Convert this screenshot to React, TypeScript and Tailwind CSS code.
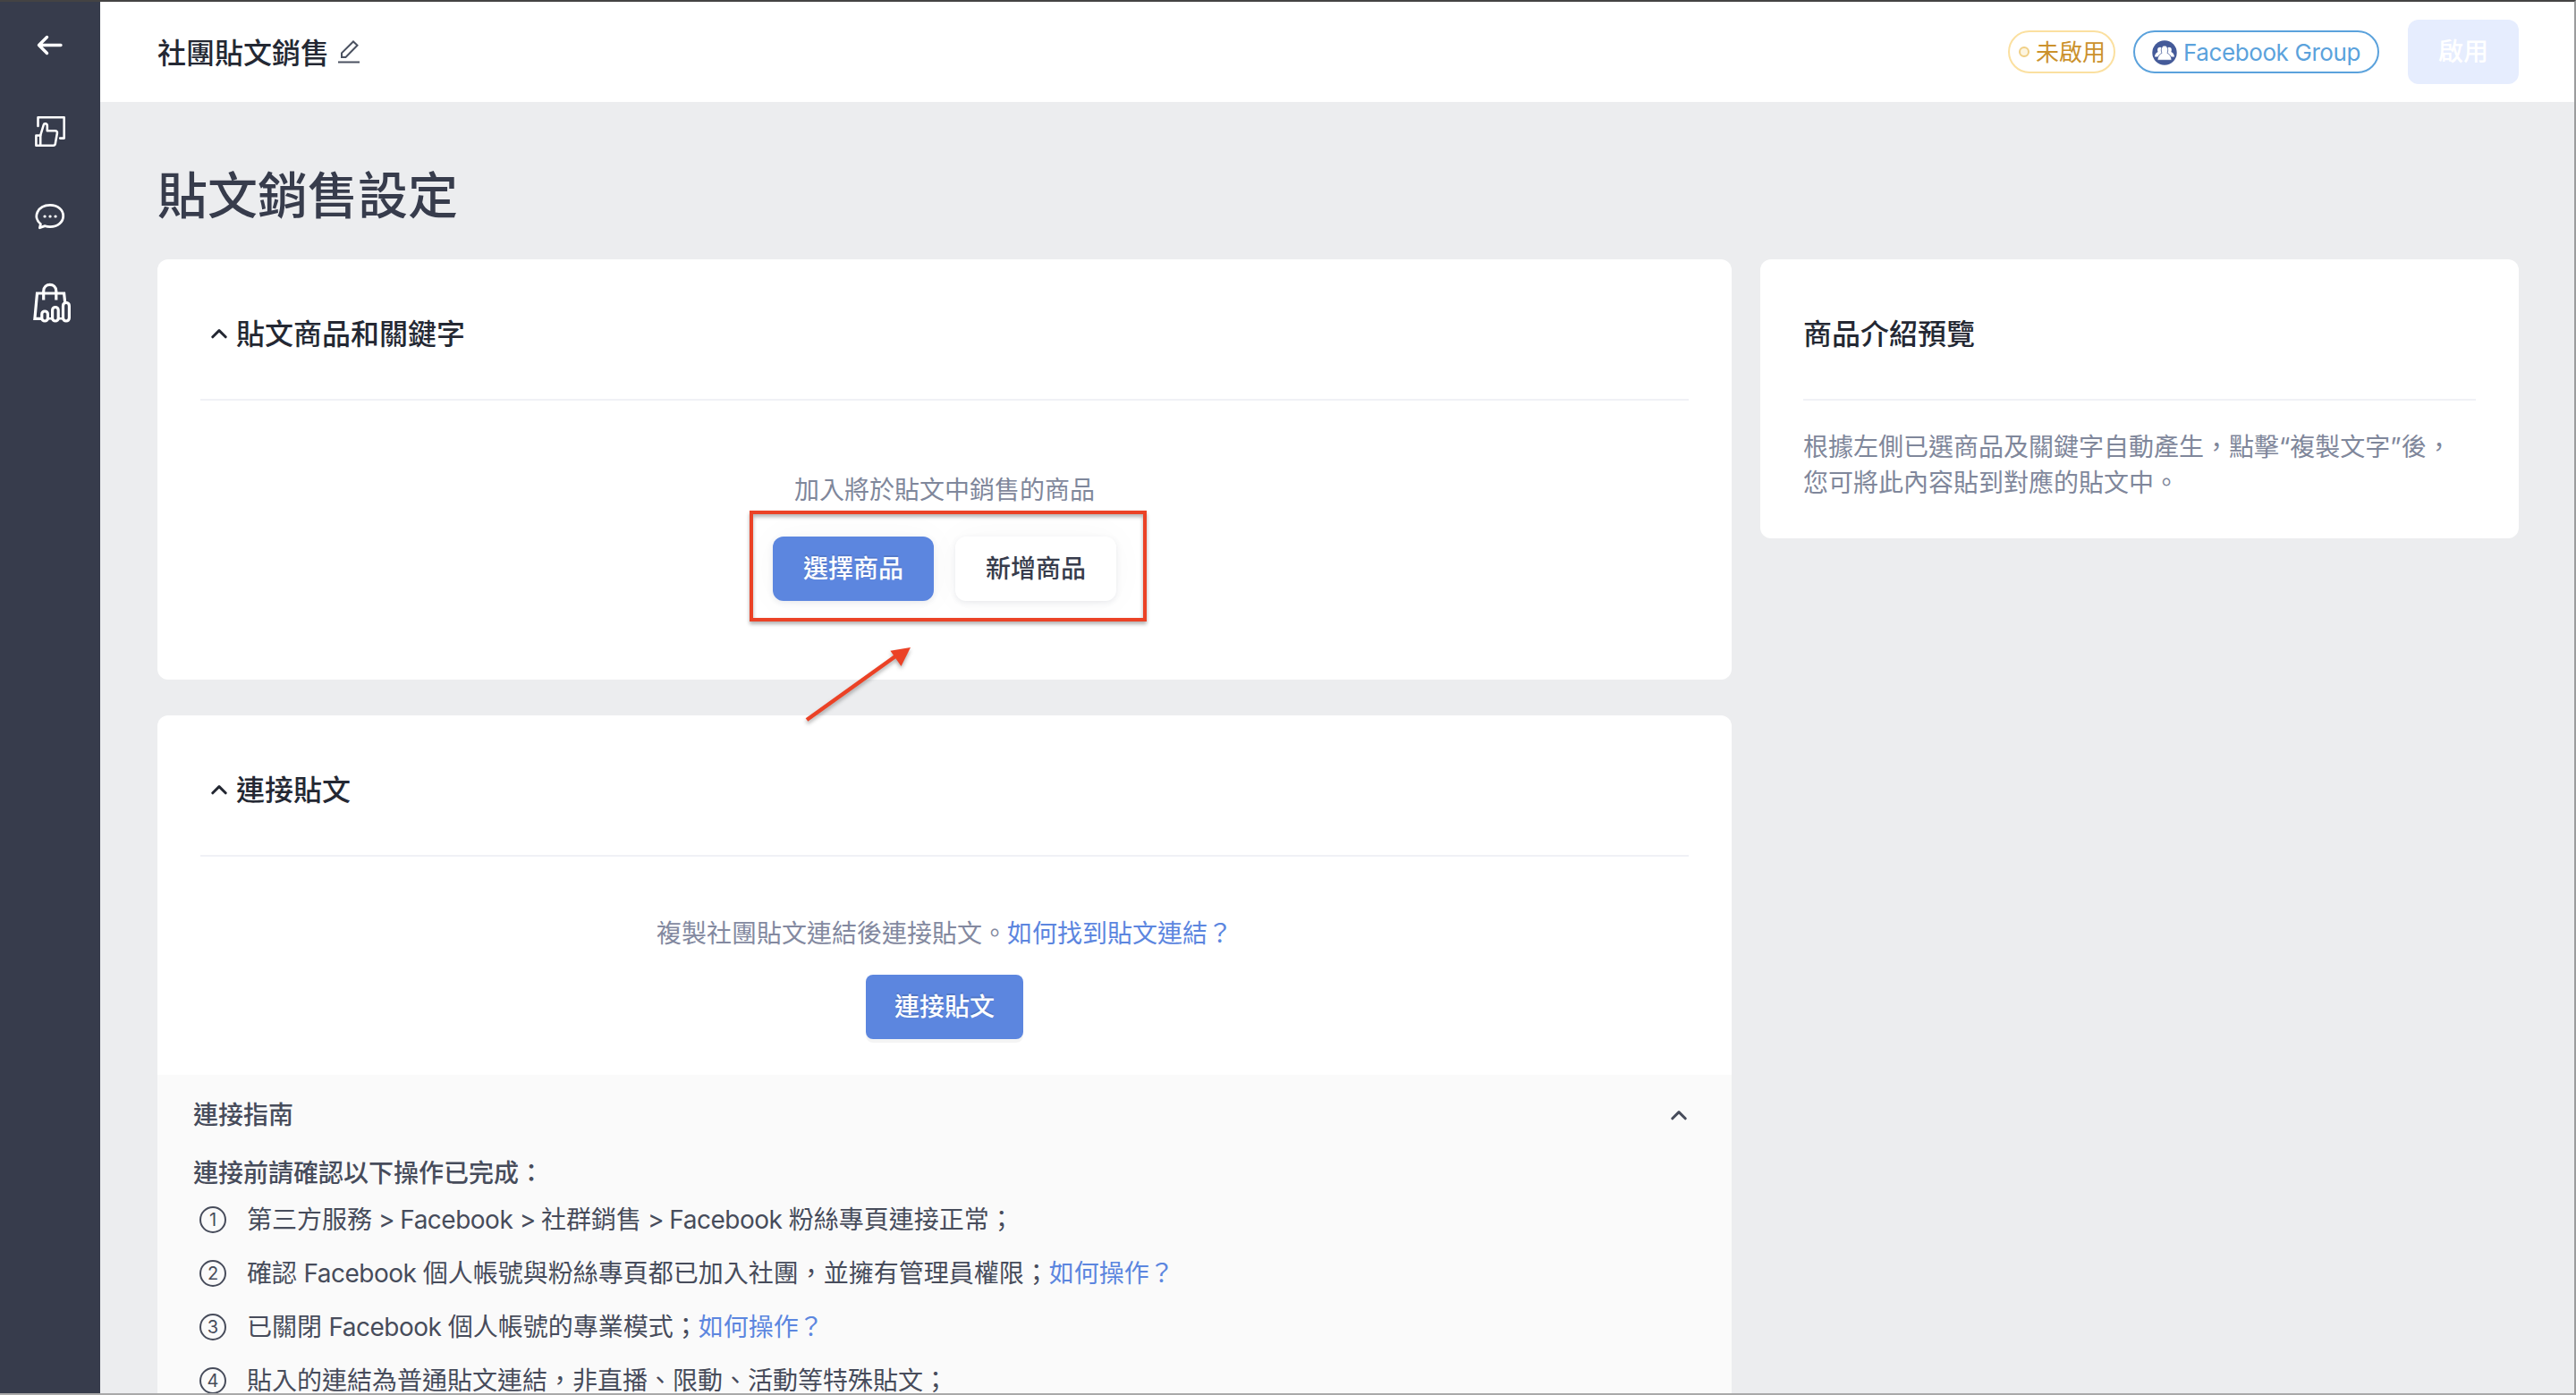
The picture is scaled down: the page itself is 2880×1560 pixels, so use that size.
import React from 'react';

function Chevron({ className }: { className?: string }) {
  return (
    <svg width="18" height="12" viewBox="0 0 18 12" fill="none" stroke="currentColor" strokeWidth="3" strokeLinecap="round" strokeLinejoin="round" className={className}>
      <path d="M1.8 9.8 9 2.6l7.2 7.2" />
    </svg>
  );
}

function Sidebar() {
  return (
    <nav className="flex w-28 shrink-0 flex-col items-center bg-[#373c4c] text-white">
      <svg className="mt-8 h-10 w-28" viewBox="0 0 112 40" fill="none" stroke="currentColor" strokeWidth="3.4" strokeLinecap="round" strokeLinejoin="round">
        <path d="M44 16.500H68M52.500 7.500 43.500 16.500l9 9" />
      </svg>
      <svg className="mt-12 h-12 w-28" viewBox="0 0 112 48" fill="none" stroke="currentColor" strokeWidth="2.600" strokeLinecap="round" strokeLinejoin="round">
        <path d="M42.500 19V9.300h29.200v23.300h-4.500" />
        <path d="M40.400 29.500h4.800v11.200h-4.800z" />
        <path d="M45.200 29.500l3.600-12c.6-2 4-1.300 4 1v5.800h8.900c1.600 0 2.500 1 2.200 2.600l-2.100 12c-.2 1.100-1 1.800-2.200 1.800H45.200" />
      </svg>
      <svg className="mt-12 h-12 w-28" viewBox="0 0 112 48" fill="none" stroke="currentColor" strokeWidth="2.800" strokeLinecap="round" strokeLinejoin="round">
        <path d="M44.400 36.700l1-4.200C36 25 42 11.400 56 11.400c9 0 14.700 5.600 14.700 12.100S65 35.600 56 35.600c-2.200 0-4-.3-5.600-.9z" />
        <path d="M50 24h.1M56 24h.1M62 24h.1" strokeWidth="3.200" />
      </svg>
      <svg className="mt-12 h-12 w-28" viewBox="0 0 112 48" fill="none" stroke="currentColor" strokeWidth="3.200">
        <path d="M46 42.300h-7.100L41.500 14h30.100l1.200 11M48.700 21.500V11.500c0-9.600 14.100-9.600 14.100 0v10" />
        <path d="M54 42.300h4M65 42.300h5" strokeWidth="2.400" />
        <rect x="46.800" y="34" width="6.600" height="11" rx="3.300" />
        <rect x="58.600" y="29.500" width="6.600" height="15.500" rx="3.300" />
        <rect x="70.500" y="24.500" width="6.900" height="20.500" rx="3.400" />
      </svg>
    </nav>
  );
}

function Header() {
  return (
    <header className="flex h-28 items-center bg-white pr-16 pl-16">
      <h1 className="mt-1 text-[32px] leading-none font-medium text-[#242833]">社團貼文銷售</h1>
      <svg className="ml-2 h-7 w-7" viewBox="0 0 28 28" fill="none" stroke="#4a5160" strokeWidth="2">
        <path d="M2 25.400h24M6 19.900v-4.600L19 2.500l4.500 4.200L10.500 19.900z" />
      </svg>
      <div className="ml-auto flex h-12 w-[120px] items-center rounded-full border-2 border-[#fbe0a0] text-[26px] text-[#cb912c]">
        <span className="mr-[7px] ml-2.5 h-3 w-3 rounded-full border-2 border-[#f0cf85] bg-[#fdf5e0]" />
        未啟用
      </div>
      <div className="ml-5 flex h-12 w-[275px] items-center rounded-full border-2 border-[#5ba2dc] pl-[19px] text-[26px] tracking-[-0.4px] text-[#5ba2dc]">
        <svg className="mt-0.5 mr-[7px] h-7 w-7" viewBox="0 0 28 28">
          <circle cx="14" cy="14" r="13.700" fill="#445a99" />
          <g fill="#fff">
            <path d="M3 18.500c.4-3.600 2-4.500 3.600-5.600-.9-2-.6-5.200 2.400-5.200 3.200 0 3.300 3.200 2.400 5.200l1 5.600z" />
            <path d="M25 18.500c-.4-3.600-2-4.500-3.600-5.600.9-2 .6-5.200-2.400-5.200-3.200 0-3.300 3.200-2.400 5.200l-1 5.600z" />
          </g>
          <path d="M6 22.300c.5-5 2.500-6.600 5-7.900-1.200-2.500-1.200-8.400 3-8.400s4.200 5.900 3 8.400c2.500 1.300 4.500 2.900 5 7.900z" fill="#fff" stroke="#445a99" strokeWidth="0.800" />
        </svg>
        Facebook Group
      </div>
      <button className="ml-8 flex h-[72px] w-[124px] items-center justify-center rounded-xl bg-[#e6edfe] text-[28px] font-medium text-white">啟用</button>
    </header>
  );
}

function SectionTitle({ children }: { children: React.ReactNode }) {
  return (
    <div className="mx-12 flex h-[158px] items-center border-b-2 border-[#f0f1f6] pl-3 text-[#242833]">
      <Chevron className="mt-2.5 mr-2.5" />
      <h3 className="mt-[11px] text-[32px] leading-none font-medium">{children}</h3>
    </div>
  );
}

function ProductCard() {
  return (
    <section className="h-[470px] rounded-xl bg-white">
      <SectionTitle>貼文商品和關鍵字</SectionTitle>
      <div className="flex flex-col items-center pt-20">
        <p className="text-[28px] leading-10 text-[#7f879b]">加入將於貼文中銷售的商品</p>
        <div className="relative mt-8 flex gap-6">
          <button className="h-[72px] w-[180px] rounded-xl bg-[#5c86df] text-[28px] font-medium text-white shadow-[0_2px_6px_rgba(60,70,100,0.1),0_0_40px_rgba(0,0,0,0.03)] [text-shadow:0_-2px_0_rgba(0,0,0,0.1)]">選擇商品</button>
          <button className="h-[72px] w-[180px] rounded-xl bg-white text-[28px] font-medium text-[#373c4c] shadow-[0_2px_6px_rgba(60,70,100,0.1),0_0_40px_rgba(0,0,0,0.03)]">新增商品</button>
          <div className="absolute -top-[29px] -left-[26px] h-[124px] w-[444px] border-4 border-[#eb4226] shadow-[0_3px_4px_rgba(0,0,0,0.3),inset_0_3px_4px_rgba(0,0,0,0.3)]" />
          <svg className="absolute top-[118px] left-[30px] h-24 w-32 drop-shadow-[0_3px_2px_rgba(0,0,0,0.3)]" viewBox="0 0 128 96" fill="#eb4226">
            <path d="M8 87 107 16" stroke="#eb4226" strokeWidth="4.400" />
            <path d="M124 6 101.400 9.700 113.500 27z" />
          </svg>
        </div>
      </div>
    </section>
  );
}

const link = 'text-[#5c86df]';

const steps: { text: string; help?: boolean }[] = [
  { text: '第三方服務 > Facebook > 社群銷售 > Facebook 粉絲專頁連接正常；' },
  { text: '確認 Facebook 個人帳號與粉絲專頁都已加入社團，並擁有管理員權限；', help: true },
  { text: '已關閉 Facebook 個人帳號的專業模式；', help: true },
  { text: '貼入的連結為普通貼文連結，非直播、限動、活動等特殊貼文；' },
];

// Latin runs inside the Chinese sentences are set slightly tighter.
function MixedText({ children }: { children: string }) {
  return (
    <>
      {children.split(/( ?Facebook ?| ?> ?)/).map((part, i) => {
        if (part.includes('Facebook')) return <span key={i} className="tracking-[-0.5px]">{part}</span>;
        if (part.includes('>')) return <span key={i} className="tracking-[-1px]">{part}</span>;
        return part;
      })}
    </>
  );
}

function ConnectCard() {
  return (
    <section className="mt-10 rounded-xl bg-white">
      <SectionTitle>連接貼文</SectionTitle>
      <div className="flex h-[244px] flex-col items-center pt-[66px]">
        <p className="text-[28px] leading-10 text-[#8389a0]">
          複製社團貼文連結後連接貼文。<a className={link}>如何找到貼文連結？</a>
        </p>
        <button className="mt-[26px] h-[72px] w-[176px] rounded-lg bg-[#5c86df] text-[28px] font-medium text-white shadow-[0_4px_0_rgba(0,0,0,0.045)] [text-shadow:0_-2px_0_rgba(0,0,0,0.12)]">連接貼文</button>
      </div>
      <div className="bg-[#fafafa] px-10 text-[28px] text-[#474c5b]">
        <div className="flex h-[90px] items-center justify-between pr-2.5">
          <span className="font-medium">連接指南</span>
          <Chevron />
        </div>
        <p className="h-[42px] leading-10 font-medium">連接前請確認以下操作已完成：</p>
        <ol>
          {steps.map((step, i) => (
            <li key={step.text} className="flex h-[60px] items-center pl-[7px]">
              <span className="mr-[23px] flex h-[30px] w-[30px] items-center justify-center rounded-full border-2 border-[#474c5b] text-[20px] leading-none">{i + 1}</span>
              <span className="whitespace-nowrap">
                <MixedText>{step.text}</MixedText>
                {step.help && <a className={link}>如何操作？</a>}
              </span>
            </li>
          ))}
        </ol>
      </div>
    </section>
  );
}

function PreviewCard() {
  return (
    <aside className="h-[312px] w-[848px] shrink-0 rounded-xl bg-white px-12">
      <div className="flex h-[158px] items-center border-b-2 border-[#f0f1f6]">
        <h3 className="mt-[11px] text-[32px] leading-none font-medium text-[#242833]">商品介紹預覽</h3>
      </div>
      <p className="pt-8 text-[28px] leading-10 whitespace-nowrap text-[#7f879b]">
        根據左側已選商品及關鍵字自動產生，點擊“複製文字”後，
        <br />
        您可將此內容貼到對應的貼文中。
      </p>
    </aside>
  );
}

export default function App() {
  return (
    <div className="relative flex h-[1560px] w-[2880px] overflow-hidden bg-[#ecedef] pt-0.5 font-['Inter','Noto_Sans_CJK_TC',sans-serif]">
      <Sidebar />
      <div className="flex-1">
        <Header />
        <main className="pr-16 pl-16">
          <h2 className="h-44 pt-[75px] text-[56px] leading-[60px] font-medium text-[#373c4c]">貼文銷售設定</h2>
          <div className="flex items-start gap-8">
            <div className="w-[1760px] shrink-0">
              <ProductCard />
              <ConnectCard />
            </div>
            <PreviewCard />
          </div>
        </main>
      </div>
      <div className="pointer-events-none absolute inset-0 border-t-2 border-r-2 border-b-2 border-t-[#444343] border-r-[#9b9c9d] border-b-[#a9a9a9]" />
    </div>
  );
}
